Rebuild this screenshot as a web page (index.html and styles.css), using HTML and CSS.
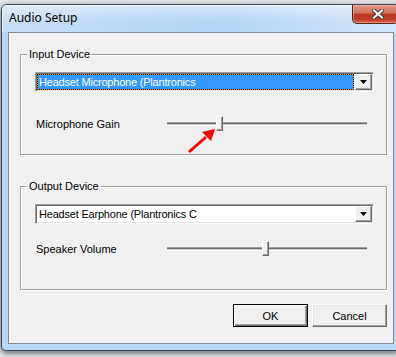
FILE: index.html
```html
<!DOCTYPE html>
<html lang="en">
<head>
    <meta charset="UTF-8">
    <title>Audio Setup</title>
    <link rel="stylesheet" href="styles.css">
</head>
<body>
    <div class="window">
        <div class="titlebar">
            <span class="title">Audio Setup</span>
            <button class="close" aria-label="Close">
                <svg width="12" height="10" viewBox="0 0 12 10">
                    <path d="M2 1.5 L10 8.5 M10 1.5 L2 8.5" stroke="#3b3b3b" stroke-width="4" stroke-linecap="square"/>
                    <path d="M2 1.5 L10 8.5 M10 1.5 L2 8.5" stroke="#fff" stroke-width="2" stroke-linecap="square"/>
                </svg>
            </button>
        </div>

        <div class="client">
            <div class="group group-input">
                <div class="legend">Input Device</div>
                <div class="combo">
                    <div class="field focused">Headset Microphone (Plantronics</div>
                    <div class="drop"><svg width="7" height="4" viewBox="0 0 7 4"><path d="M0 0 H7 L3.5 4 Z" fill="#000"/></svg></div>
                </div>
                <div class="row">
                    <span class="label">Microphone Gain</span>
                    <div class="slider">
                        <div class="track"></div>
                        <div class="thumb" style="left: 49px"></div>
                    </div>
                </div>
            </div>

            <div class="group group-output">
                <div class="legend">Output Device</div>
                <div class="combo">
                    <div class="field">Headset Earphone (Plantronics C</div>
                    <div class="drop"><svg width="7" height="4" viewBox="0 0 7 4"><path d="M0 0 H7 L3.5 4 Z" fill="#000"/></svg></div>
                </div>
                <div class="row">
                    <span class="label">Speaker Volume</span>
                    <div class="slider">
                        <div class="track"></div>
                        <div class="thumb" style="left: 95px"></div>
                    </div>
                </div>
            </div>

            <div class="actions">
                <button class="btn default">OK</button>
                <button class="btn">Cancel</button>
            </div>
        </div>
    </div>

    <!-- annotation drawn on top of the screenshot -->
    <svg class="annotation" width="396" height="357" viewBox="0 0 396 357">
        <line x1="189" y1="152" x2="206" y2="137" stroke="#ff0000" stroke-width="3"/>
        <polygon points="215,129 211,141 202,132" fill="#ff0000"/>
    </svg>
</body>
</html>
```

FILE: styles.css
```css
* {
    margin: 0;
    padding: 0;
    box-sizing: border-box;
}

body {
    width: 396px;
    height: 357px;
    overflow: hidden;
    position: relative;
    background: #e4e8ec;
    font-family: "Liberation Sans", Arial, sans-serif;
    font-size: 11px;
    color: #000;
}

.window {
    width: 400px;
    margin: 4px 0 0 1px;
    border: 1px solid #3c4857;
    border-radius: 6px 6px 5px 5px;
    background: #bcd8f6;
    box-shadow: 0 2px 6px rgba(0, 0, 0, 0.6);
}

.titlebar {
    height: 27px;
    display: flex;
    align-items: flex-start;
    border-radius: 5px 5px 0 0;
    background:
        linear-gradient(rgba(255, 255, 255, 0.45), rgba(255, 255, 255, 0) 60%),
        linear-gradient(to right, #c8def5 0%, #bad6f5 35%, #b4d3f5 55%, #c6ddf6 80%, #d3e5f7 100%);
    box-shadow: inset 0 1px 0 rgba(255, 255, 255, 0.8), inset 1px 0 0 rgba(255, 255, 255, 0.6);
}

.title {
    font-family: "Noto Sans", sans-serif;
    font-size: 12px;
    line-height: 16px;
    padding: 5px 0 0 7px;
    color: #000;
}

.close {
    margin-left: auto;
    margin-right: 1px;
    width: 47px;
    height: 19px;
    border: 1px solid #5a2418;
    border-top: none;
    border-radius: 0 0 5px 5px;
    background:
        linear-gradient(#e49a88 0%, #d4705b 45%, #c23a24 50%, #be3822 75%, #d8664a 100%);
    box-shadow: inset 0 0 0 1px rgba(255, 200, 180, 0.4);
    display: flex;
    align-items: center;
    justify-content: center;
    padding-left: 4px;
}

.client {
    height: 312px;
    margin: 0 6px 6px;
    border: 1px solid #7f8b98;
    background: #f0f0f0;
    padding: 21px 0 0 11px;
}

.group {
    width: 367px;
    border: 1px solid #a0a0a0;
    box-shadow: 1px 1px 0 #fff, inset 1px 1px 0 #fff;
    padding: 0 0 0 14px;
}

.group-input {
    height: 101px;
}

.group-output {
    height: 104px;
    margin-top: 31px;
}

.legend {
    width: fit-content;
    margin: -7px 0 0 -8px;
    padding: 0 2px;
    line-height: 13px;
    background: #f0f0f0;
}

.combo {
    width: 339px;
    height: 20px;
    margin-top: 11px;
    display: flex;
    gap: 1px;
    border: 1px solid;
    border-color: #a0a0a0 #fff #fff #a0a0a0;
    box-shadow: inset 1px 1px 0 #696969, inset -1px -1px 0 #e3e3e3;
    padding: 1px;
    background: #fff;
}

.field {
    flex: 1;
    height: 16px;
    line-height: 14px;
    padding-left: 1px;
    border: 1px solid transparent;
    letter-spacing: -0.2px;
    white-space: nowrap;
    overflow: hidden;
}

.field.focused {
    color: #fff;
    border: 1px dotted #111;
    background: linear-gradient(#3399ff, #3399ff) padding-box, linear-gradient(#e08c22, #e08c22) border-box;
}

.drop {
    width: 17px;
    height: 16px;
    background: #f0f0f0;
    border: 1px solid;
    border-color: #fff #696969 #696969 #fff;
    box-shadow: inset -1px -1px 0 #a0a0a0;
    display: flex;
    align-items: center;
    justify-content: center;
}

.row {
    display: grid;
    grid-template-columns: 132px 200px;
    align-items: center;
    height: 15px;
    margin-top: 24px;
}

.group-output .row {
    margin-top: 17px;
}

.label {
    padding-left: 1px;
}

.slider {
    position: relative;
    height: 15px;
}

.track {
    margin-top: 6px;
    height: 4px;
    border-top: 1px solid #a0a0a0;
    border-bottom: 1px solid #fff;
    background: linear-gradient(#6d6d6d 50%, #c8c8c8 50%);
}

.thumb {
    position: absolute;
    top: 0;
    width: 7px;
    height: 15px;
    background: #f0f0f0;
    border: 1px solid;
    border-color: #fff #696969 #696969 #fff;
    box-shadow: inset -1px -1px 0 #a0a0a0;
}

.actions {
    width: 367px;
    margin-top: 14px;
    display: flex;
    justify-content: flex-end;
    gap: 4px;
}

.btn {
    width: 75px;
    height: 23px;
    font-family: "Liberation Sans", Arial, sans-serif;
    font-size: 11px;
    color: #000;
    background: #f0f0f0;
    border: 1px solid;
    border-color: #fff #696969 #696969 #fff;
    box-shadow: inset -1px -1px 0 #a0a0a0, inset 1px 1px 0 #e3e3e3;
}

.btn.default {
    border: 1px solid #000;
    box-shadow: inset 1px 1px 0 #fff, inset -1px -1px 0 #696969, inset -2px -2px 0 #a0a0a0;
}

.annotation {
    position: absolute;
    left: 0;
    top: 0;
    pointer-events: none;
}
```
